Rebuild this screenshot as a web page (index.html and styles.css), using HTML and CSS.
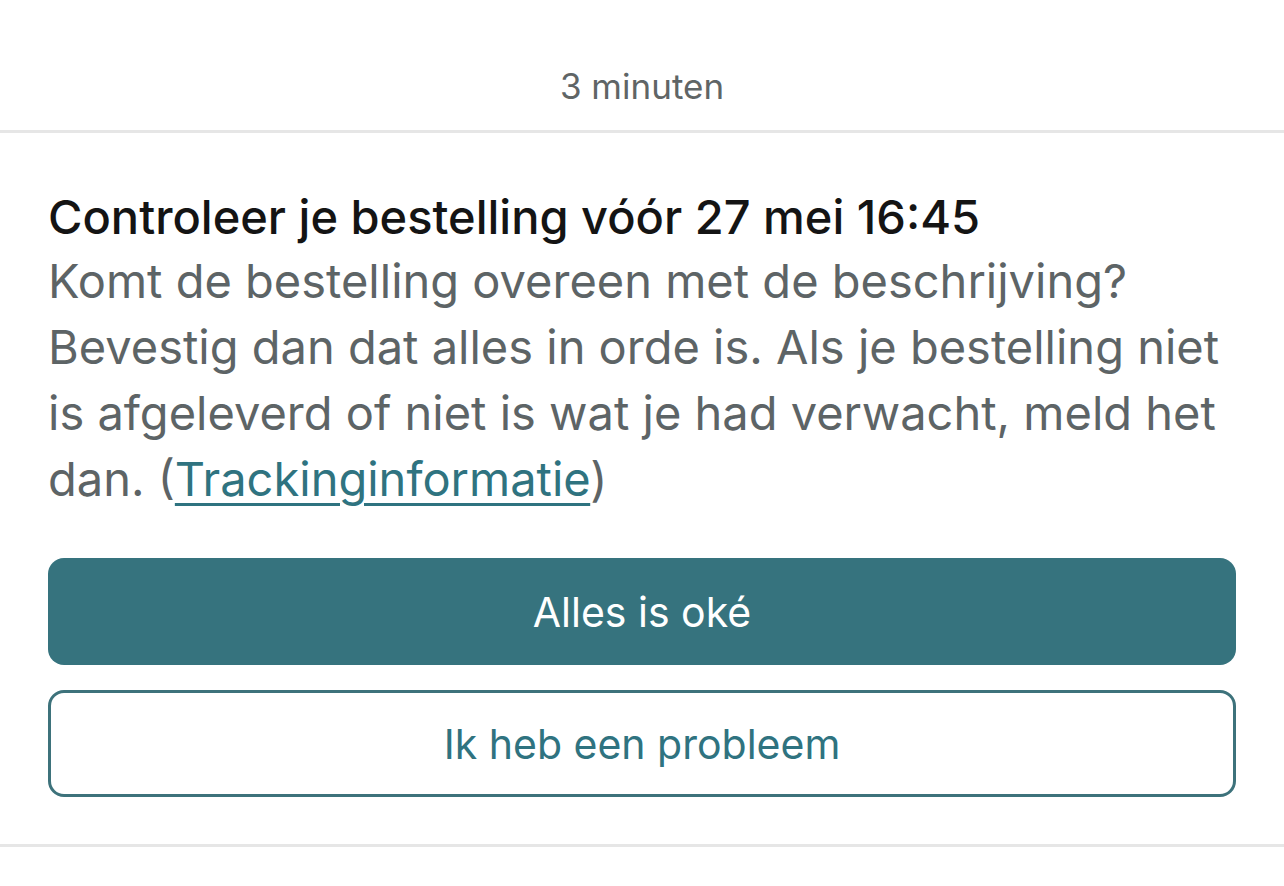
FILE: index.html
```html
<!DOCTYPE html>
<html lang="nl">
<head>
    <meta charset="UTF-8">
    <meta name="viewport" content="width=device-width, initial-scale=1.0">
    <title>Bestelling controleren</title>
    <link rel="stylesheet" href="styles.css">
</head>
<body>
    <div class="timestamp">3 minuten</div>

    <div class="card">
        <h2 class="card-title">Controleer je bestelling vóór 27 mei 16:45</h2>
        <p class="card-text">
            Komt de bestelling overeen met de beschrijving? Bevestig dan dat alles in orde is. Als je bestelling niet is afgeleverd of niet is wat je had verwacht, meld het dan. (<a href="#" class="link">Trackinginformatie</a>)
        </p>
        <div class="actions">
            <button class="btn btn-primary">Alles is oké</button>
            <button class="btn btn-outline">Ik heb een probleem</button>
        </div>
    </div>
</body>
</html>
```

FILE: styles.css
```css
body {
    font-family: Inter, "Noto Sans", Arial, sans-serif;
    margin: 0;
    padding: 0;
    background: #fff;
}
.timestamp {
    height: 133px;
    box-sizing: border-box;
    padding-top: 64px;
    text-align: center;
    font-size: 35px;
    line-height: 44px;
    color: #5f6566;
    border-bottom: 3px solid #e6e6e6;
}
.card {
    padding: 53px 48px 47px;
    border-bottom: 3px solid #e6e6e6;
}
.card-title {
    margin: 0;
    font-size: 47px;
    font-weight: 500;
    line-height: 62px;
    color: #141414;
}
.card-text {
    margin: 0;
    font-size: 47px;
    line-height: 66px;
    color: #5d6466;
}
.link {
    color: #2f7380;
    text-decoration: underline;
    text-decoration-thickness: 3px;
    text-underline-offset: 7px;
}
.actions {
    margin-top: 46px;
    display: flex;
    flex-direction: column;
    gap: 25px;
}
.btn {
    height: 107px;
    border-radius: 16px;
    font-family: inherit;
    font-size: 41px;
    cursor: pointer;
}
.btn-primary {
    background-color: #36737e;
    color: #fff;
    border: none;
}
.btn-outline {
    background-color: #fff;
    color: #2f7380;
    border: 3px solid #3d727b;
}
```
